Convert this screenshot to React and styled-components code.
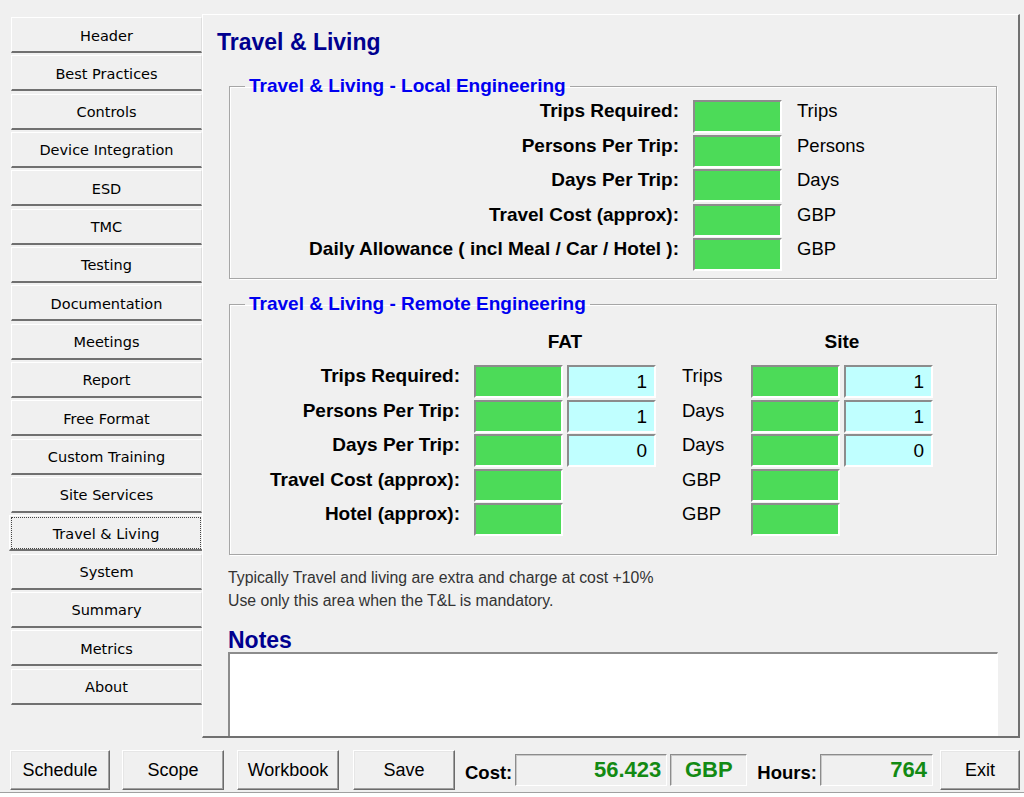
import React from 'react';
import styled, { createGlobalStyle } from 'styled-components';

const GlobalStyle = createGlobalStyle`
  html, body {
    margin: 0;
    padding: 0;
    background: #fff;
  }
  body {
    font-family: 'Liberation Sans', Arial, sans-serif;
    color: #000;
  }
  * {
    box-sizing: border-box;
  }
`;

const Window = styled.div`
  width: 1024px;
  height: 793px;
  background: #f0f0f0;
  border-bottom: 1px solid #a0a0a0;
  padding-top: 14px;
  display: flex;
  flex-direction: column;
`;

const Main = styled.div`
  display: flex;
  height: 724px;
`;

const Nav = styled.nav`
  width: 191px;
  margin: 3px 0 0 11px;
  display: grid;
  grid-auto-rows: 36px;
  row-gap: 2.33px;
  align-content: start;
`;

const NavButton = styled.button`
  background: #f0f0f0;
  border-style: solid;
  border-width: 1px 1px 2px 1px;
  border-color: #fff #dedede #707070 #fff;
  font-family: 'DejaVu Sans', Tahoma, sans-serif;
  font-size: 14.5px;
  color: #000;
  padding: 2px 0 0;
  outline: ${({ $active }) => ($active ? '1px dotted #444' : 'none')};
  outline-offset: -3px;
  margin: ${({ $active }) => ($active ? '0 -1px 0 -2px' : '0')};
`;

const Panel = styled.section`
  width: 818px;
  height: 724px;
  border-style: solid;
  border-width: 1px 2px 2px 1px;
  border-color: #fff #707070 #707070 #fff;
  padding: 14px 21px 0 14px;
  display: flex;
  flex-direction: column;
  overflow: hidden;
`;

const Title = styled.h1`
  margin: 0;
  font-size: 23px;
  line-height: 26px;
  font-weight: bold;
  color: #00008f;
`;

const Group = styled.fieldset`
  margin: ${({ $top }) => $top}px 0 0 12px;
  padding: ${({ $pad }) => $pad};
  border: 1px solid #a6a6a6;
  box-shadow: inset 1px 1px 0 #fff, 1px 1px 0 #fff;
  min-width: 0;
`;

const Legend = styled.legend`
  margin-left: 15px;
  padding: 0 4px;
  font-size: 19px;
  line-height: 22px;
  font-weight: bold;
  color: #0000f0;
`;

const LocalGrid = styled.div`
  display: grid;
  grid-template-columns: 449px 89px auto;
  grid-auto-rows: 33px;
  column-gap: 14px;
  row-gap: 1.5px;
`;

const RemoteGrid = styled.div`
  display: grid;
  grid-template-columns: 240px 89px 89px 87px 89px 89px;
  column-gap: 4px;
  row-gap: 1.5px;
`;

const Label = styled.div`
  text-align: right;
  font-size: 19px;
  font-weight: bold;
  line-height: 22px;
  white-space: nowrap;
  padding-right: ${({ $pr }) => $pr || 0}px;
`;

const Unit = styled.div`
  font-size: 18.5px;
  line-height: 22px;
  padding-left: ${({ $pl }) => $pl || 0}px;
`;

const ColHead = styled.div`
  grid-column: ${({ $col }) => $col};
  text-align: center;
  font-size: 19px;
  font-weight: bold;
  line-height: 22px;
  margin-bottom: 10.5px;
`;

const Cell = styled.div`
  height: 33px;
  border-style: solid;
  border-width: 2px;
  border-color: #8c8c8c #fff #fff #8c8c8c;
  background: ${({ $kind }) => ($kind === 'value' ? '#c0ffff' : '#4cdb58')};
  font-size: 19px;
  line-height: 29px;
  text-align: right;
  padding-right: 7px;
`;

const Blank = styled.div``;

const Hint = styled.p`
  margin: 10.5px 0 0 11px;
  font-size: 15.8px;
  line-height: 23px;
  color: #333;
`;

const NotesTitle = styled.h2`
  margin: 17.5px 0 0 11px;
  font-size: 23px;
  line-height: 23px;
  font-weight: bold;
  color: #00008f;
`;

const NotesBox = styled.textarea`
  flex: 1;
  min-height: 0;
  margin: 0 -1px 0 11px;
  resize: none;
  background: #fff;
  border-style: solid;
  border-width: 2px 1px 0 2px;
  border-color: #8c8c8c #fff #fff #8c8c8c;
  outline: none;
`;

const Footer = styled.div`
  display: flex;
  align-items: center;
  height: 40px;
  margin-top: 12px;
  padding-left: 10px;
`;

const FootButton = styled.button`
  width: ${({ $w }) => $w}px;
  margin-left: ${({ $gap }) => $gap || 0}px;
  height: 40px;
  background: #f0f0f0;
  border: 1px solid;
  border-color: #fff #6b6b6b #6b6b6b #fff;
  box-shadow: inset -1px -1px 0 #a0a0a0, inset 1px 1px 0 #e6e6e6;
  font-family: 'Liberation Sans', Arial, sans-serif;
  font-size: 18px;
  color: #000;
  padding: 0;
`;

const FootLabel = styled.span`
  margin-left: ${({ $gap }) => $gap}px;
  font-size: 18.5px;
  font-weight: bold;
  line-height: 22px;
  padding-top: 6px;
`;

const Readout = styled.div`
  width: ${({ $w }) => $w}px;
  margin-left: 3px;
  height: 32px;
  border: 1px solid;
  border-color: #8c8c8c #fff #fff #8c8c8c;
  box-shadow: inset 1px 1px 0 #c8c8c8;
  color: #138a13;
  font-size: 22px;
  font-weight: bold;
  line-height: 30px;
  text-align: ${({ $center }) => ($center ? 'center' : 'right')};
  padding-right: ${({ $center }) => ($center ? 0 : 5)}px;
`;

const navItems = [
  'Header',
  'Best Practices',
  'Controls',
  'Device Integration',
  'ESD',
  'TMC',
  'Testing',
  'Documentation',
  'Meetings',
  'Report',
  'Free Format',
  'Custom Training',
  'Site Services',
  'Travel & Living',
  'System',
  'Summary',
  'Metrics',
  'About',
];

const localRows = [
  ['Trips Required:', 'Trips'],
  ['Persons Per Trip:', 'Persons'],
  ['Days Per Trip:', 'Days'],
  ['Travel Cost (approx):', 'GBP'],
  ['Daily Allowance ( incl Meal / Car / Hotel ):', 'GBP'],
];

const remoteRows = [
  { label: 'Trips Required:', unit: 'Trips', fat: '1', site: '1' },
  { label: 'Persons Per Trip:', unit: 'Days', fat: '1', site: '1' },
  { label: 'Days Per Trip:', unit: 'Days', fat: '0', site: '0' },
  { label: 'Travel Cost (approx):', unit: 'GBP' },
  { label: 'Hotel (approx):', unit: 'GBP' },
];

const App = () => {
  return (
    <>
      <GlobalStyle />
      <Window>
        <Main>
          <Nav>
            {navItems.map(item => (
              <NavButton key={item} type="button" $active={item === 'Travel & Living'}>
                {item}
              </NavButton>
            ))}
          </Nav>
          <Panel>
            <Title>Travel &amp; Living</Title>

            <Group $top={20} $pad="3px 0 7px 0">
              <Legend>Travel &amp; Living - Local Engineering</Legend>
              <LocalGrid>
                {localRows.map(([label, unit]) => (
                  <React.Fragment key={label}>
                    <Label>{label}</Label>
                    <Cell />
                    <Unit $pl={1}>{unit}</Unit>
                  </React.Fragment>
                ))}
              </LocalGrid>
            </Group>

            <Group $top={14} $pad="16px 0 18px 0">
              <Legend>Travel &amp; Living - Remote Engineering</Legend>
              <RemoteGrid>
                <ColHead $col="2 / span 2">FAT</ColHead>
                <ColHead $col="5 / span 2">Site</ColHead>
                {remoteRows.map(row => (
                  <React.Fragment key={row.label}>
                    <Label $pr={10}>{row.label}</Label>
                    <Cell />
                    {row.fat ? <Cell $kind="value">{row.fat}</Cell> : <Blank />}
                    <Unit $pl={22}>{row.unit}</Unit>
                    <Cell />
                    {row.site ? <Cell $kind="value">{row.site}</Cell> : <Blank />}
                  </React.Fragment>
                ))}
              </RemoteGrid>
            </Group>

            <Hint>
              Typically Travel and living are extra and charge at cost +10%
              <br />
              Use only this area when the T&amp;L is mandatory.
            </Hint>

            <NotesTitle>Notes</NotesTitle>
            <NotesBox />
          </Panel>
        </Main>

        <Footer>
          <FootButton type="button" $w={100}>Schedule</FootButton>
          <FootButton type="button" $w={102} $gap={12}>Scope</FootButton>
          <FootButton type="button" $w={102} $gap={13}>Workbook</FootButton>
          <FootButton type="button" $w={102} $gap={14}>Save</FootButton>
          <FootLabel $gap={10}>Cost:</FootLabel>
          <Readout $w={152}>56.423</Readout>
          <Readout $w={77} $center>GBP</Readout>
          <FootLabel $gap={10}>Hours:</FootLabel>
          <Readout $w={113}>764</Readout>
          <FootButton type="button" $w={80} $gap={7}>Exit</FootButton>
        </Footer>
      </Window>
    </>
  );
};

export default App;
